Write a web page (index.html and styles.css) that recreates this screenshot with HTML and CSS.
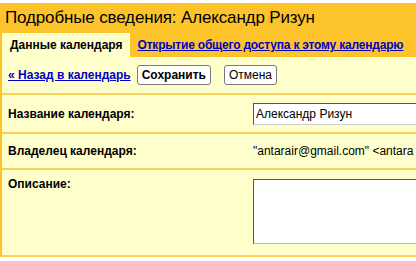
FILE: index.html
```html
<html>
  <head>
    <title>Подробные сведения</title>
    <link rel="stylesheet" href="styles.css">
  </head>
  <body>
    <header class="title">Подробные сведения: Александр Ризун</header>
    <nav class="tabs">
      <span class="tab active">Данные календаря</span>
      <a class="tab" href="#">Открытие общего доступа к этому календарю</a>
    </nav>
    <section class="content">
      <div class="actions">
        <a href="#" class="back">« Назад в календарь</a>
        <button class="btn save">Сохранить</button>
        <button class="btn">Отмена</button>
      </div>
      <div class="row name">
        <span class="label">Название календаря:</span>
        <span class="value"><input class="field" type="text" value="Александр Ризун"></span>
      </div>
      <div class="row owner">
        <span class="label">Владелец календаря:</span>
        <span class="value">"antarair@gmail.com" &lt;antara</span>
      </div>
      <div class="row desc">
        <span class="label">Описание:</span>
        <span class="value"><textarea class="area"></textarea></span>
      </div>
    </section>
  </body>
</html>
```

FILE: styles.css
```css
body { margin: 0; padding-top: 3px; background: #fff; font-family: "Liberation Sans", Arial, sans-serif; overflow: hidden; width: 416px; }
.title {
  background: #fcc42a;
  height: 30px;
  line-height: 30px;
  padding-left: 5px;
  font-size: 17px;
  letter-spacing: -0.15px;
  white-space: nowrap;
}
.tabs {
  background: #fcc42a;
  display: flex;
  align-items: flex-end;
  height: 24px;
  padding-left: 2px;
  white-space: nowrap;
}
.tab {
  font-size: 12px;
  font-weight: bold;
  line-height: 24px;
  padding: 0 7px 0 8px;
}
.tab.active {
  background: #ffffcc;
  color: #000;
}
a.tab, .back {
  color: #0000cc;
  text-decoration: underline;
}
a.tab { letter-spacing: -0.2px; }
.content {
  background: #ffffcc;
  border-left: 2px solid #fcc42a;
  width: 600px;
}
.actions {
  display: flex;
  align-items: center;
  gap: 6px;
  height: 36px;
  padding-left: 6px;
}
.back {
  font-size: 12px;
  font-weight: bold;
}
.btn {
  font-family: inherit;
  font-size: 12px;
  height: 20px;
  padding: 0 4px;
  background: #fff;
  border: 1px solid #7a7a7a;
  border-radius: 3px;
  margin-right: 7px;
}
.btn.save { font-weight: bold; }
.row {
  display: flex;
  border-top: 2px solid #f7d25c;
  font-size: 12px;
}
.label {
  width: 245px;
  padding-left: 6px;
  font-weight: bold;
  flex: none;
}
.value { white-space: nowrap; }
.name { height: 37px; align-items: center; }
.owner { height: 34px; align-items: center; }
.desc { height: 89px; padding-top: 7px; box-sizing: border-box; border-bottom: 2px solid #f7d25c; }
.field {
  font-family: inherit;
  font-size: 12px;
  width: 200px;
  height: 22px;
  border: 1px solid #555;
  border-right-color: #ccc;
  border-bottom-color: #ccc;
  padding: 0 2px;
}
.area {
  width: 200px;
  height: 65px;
  border: 1px solid #bbb;
  border-top-color: #555;
  border-left-color: #555;
  resize: none;
  margin-top: 2px;
}
```
